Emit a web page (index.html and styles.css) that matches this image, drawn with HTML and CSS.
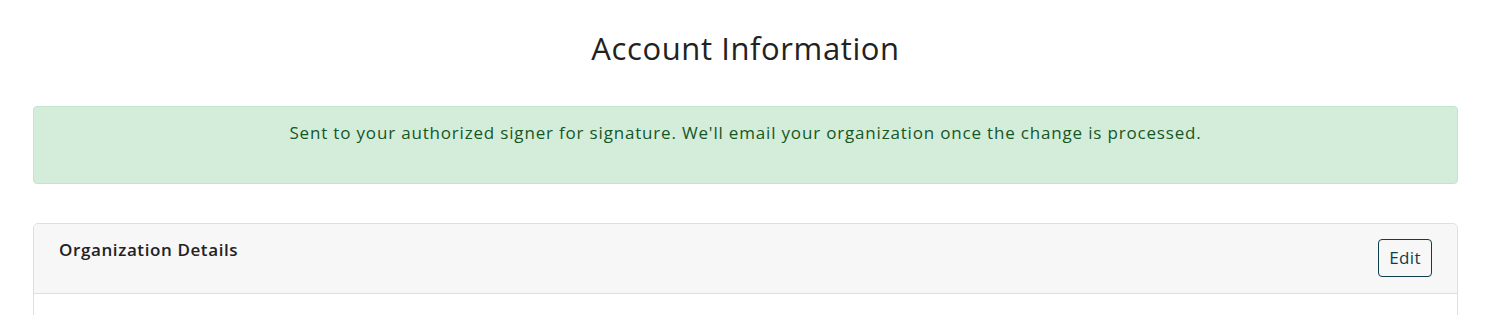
FILE: index.html
```html
<!DOCTYPE html>
<html>
<head>
    <link rel="stylesheet" href="styles.css">
</head>

<body>
    <div class="page">
        <h1 class="page-title">Account Information</h1>

        <div class="alert-success">
            <p>Sent to your authorized signer for signature. We'll email your organization once the change is processed.</p>
        </div>

        <div class="card">
            <div class="card-header">
                <h2 class="card-title">Organization Details</h2>
                <button type="button" class="btn-edit">Edit</button>
            </div>
            <div class="card-body"></div>
        </div>
    </div>
</body>

</html>
```

FILE: styles.css
```css
body{
    margin: 0;
    font-family: "Open Sans", "Noto Sans", sans-serif;
    color: #212529;
    background-color: #fff;
}
.page{
    padding: 0 42px 0 33px;
}
.page-title{
    margin: 0;
    padding: 28px 0 38px;
    font-size: 31px;
    font-weight: 400;
    line-height: 40px;
    letter-spacing: 0.6px;
    text-align: center;
    color: #222;
}
.alert-success{
    background-color: #d4edda;
    border: 1px solid #c3e6cb;
    border-radius: 4px;
    color: #155724;
    padding: 14px 20px 0;
    margin-bottom: 39px;
    text-align: center;
}
.alert-success p{
    margin: 0 0 38px;
    font-size: 17px;
    line-height: 24px;
    letter-spacing: 0.82px;
}
.card{
    border: 1px solid #dfdfdf;
    border-radius: 5px;
}
.card-header{
    display: flex;
    justify-content: space-between;
    align-items: flex-start;
    padding: 15px 25px 16px;
    background-color: #f7f7f7;
    border-bottom: 1px solid #dfdfdf;
    border-radius: 5px 5px 0 0;
}
.card-title{
    margin: 0;
    font-size: 17px;
    font-weight: 600;
    line-height: 22px;
    letter-spacing: 0.6px;
    color: #222;
}
.btn-edit{
    font-family: inherit;
    font-size: 17px;
    padding: 6px 10px;
    line-height: 24px;
    letter-spacing: 0.4px;
    color: #0f3d4c;
    background-color: transparent;
    border: 1px solid #0f3d4c;
    border-radius: 4px;
}
.card-body{
    min-height: 120px;
}
```
